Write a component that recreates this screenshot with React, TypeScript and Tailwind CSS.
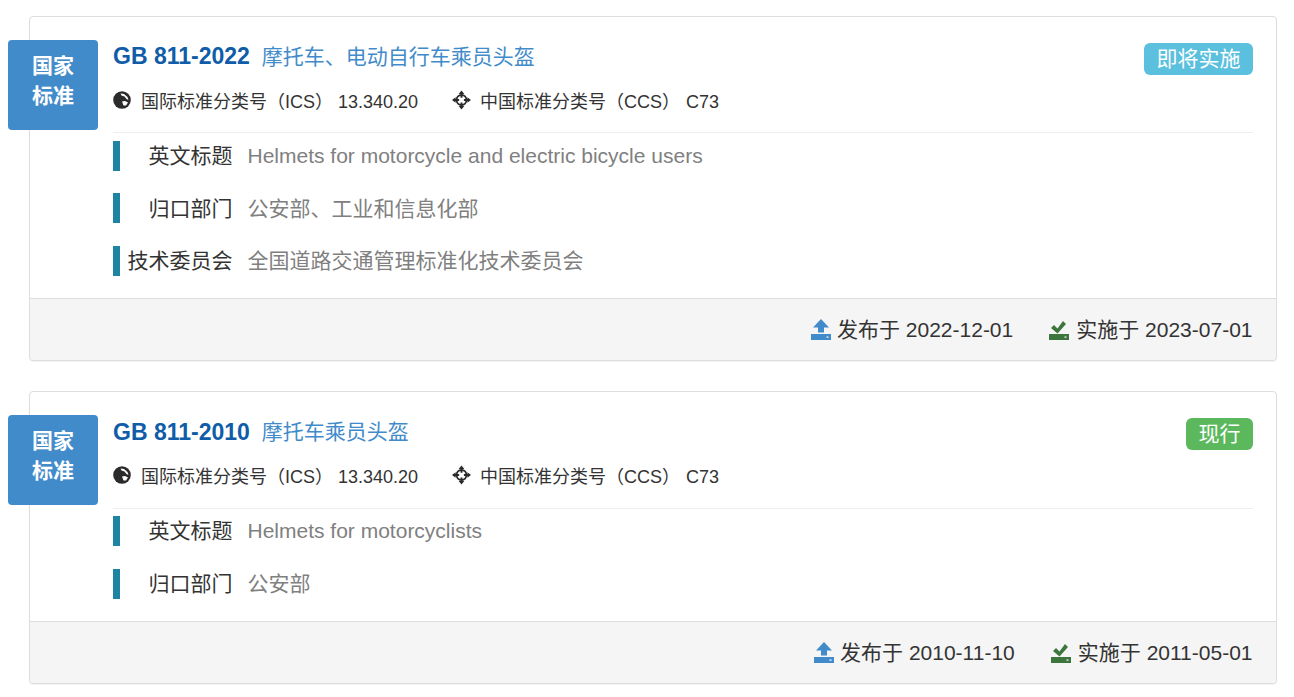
import React from 'react';

const GlobeIcon = () => (
  <svg width="18" height="18" viewBox="0 0 18 18" className="-mt-[4px] shrink-0">
    <circle cx="9" cy="9" r="8.8" fill="#2b2b2b" />
    <path d="M7.5 2.5 L11 3 L14.5 6 L15.5 9 L13.5 8 L11.5 5.5 L8.5 4.5 Z" fill="#ffffff" />
    <path d="M9 10.5 L12 10 L15 11.5 L13 14.5 L10.5 14.5 Z" fill="#ffffff" />
  </svg>
);

const TargetIcon = () => (
  <svg width="19" height="20" viewBox="0 0 20 20" className="-mt-[4px] shrink-0">
    <circle cx="10" cy="10" r="5.2" fill="none" stroke="#2b2b2b" strokeWidth="2" />
    <path d="M10 0 L13 3.8 H7 Z M10 20 L13 16.2 H7 Z M0 10 L3.8 7 V13 Z M20 10 L16.2 7 V13 Z" fill="#2b2b2b" />
    <path d="M9 3 H11 V7.5 H9 Z M9 12.5 H11 V17 H9 Z M3 9 H7.5 V11 H3 Z M12.5 9 H17 V11 H12.5 Z" fill="#2b2b2b" />
  </svg>
);

const UploadIcon = () => (
  <svg width="20" height="21" viewBox="0 0 20 21" className="shrink-0">
    <path d="M10 0 L18 8.5 H13 V13.5 H7 V8.5 H2 Z" fill="#428bca" />
    <path d="M0 15 H20 V21 H0 Z" fill="#428bca" />
    <rect x="15.5" y="17.5" width="2" height="1.2" fill="#ffffff" />
  </svg>
);

const SavedIcon = () => (
  <svg width="20" height="21" viewBox="0 0 20 21" className="shrink-0">
    <path d="M2 9 L5 6 L8.5 9.5 L14 2 L17 5 L8.5 14.5 Z" fill="#3c763d" />
    <path d="M0 15 H20 V21 H0 Z" fill="#3c763d" />
    <rect x="15.5" y="17.5" width="2" height="1.2" fill="#ffffff" />
  </svg>
);

type Row = { label: string; value: string };

type Item = {
  code: string;
  title: string;
  status: string;
  statusClass: string;
  rows: Row[];
  published: string;
  implemented: string;
};

const items: Item[] = [
  {
    code: 'GB 811-2022',
    title: '摩托车、电动自行车乘员头盔',
    status: '即将实施',
    statusClass: 'bg-[#5bc0de]',
    rows: [
      { label: '英文标题', value: 'Helmets for motorcycle and electric bicycle users' },
      { label: '归口部门', value: '公安部、工业和信息化部' },
      { label: '技术委员会', value: '全国道路交通管理标准化技术委员会' },
    ],
    published: '2022-12-01',
    implemented: '2023-07-01',
  },
  {
    code: 'GB 811-2010',
    title: '摩托车乘员头盔',
    status: '现行',
    statusClass: 'bg-[#5cb85c]',
    rows: [
      { label: '英文标题', value: 'Helmets for motorcyclists' },
      { label: '归口部门', value: '公安部' },
    ],
    published: '2010-11-10',
    implemented: '2011-05-01',
  },
];

const StandardCard = ({ item }: { item: Item }) => (
  <div className="relative w-[1248px] rounded border border-[#dddddd] bg-white shadow-[0_1px_1px_rgba(0,0,0,0.05)]">
    {/* 左侧标签 */}
    <div className="absolute left-[-22px] top-[23px] flex h-[90px] w-[90px] flex-col items-center justify-center rounded bg-[#428bca] pb-[8px] text-[21px] leading-[30px] font-bold text-white">
      <span>国家</span>
      <span>标准</span>
    </div>

    <div className="pt-[23px] pr-[23px] pl-[83px]">
      <div className="flex items-start justify-between">
        <div className="flex h-[33px] items-center">
          <span className="text-[23px] font-bold text-[#0f5ca8]">{item.code}</span>
          <span className="ml-[12px] text-[21px] text-[#428bca]">{item.title}</span>
        </div>
        <span className={`mt-[3px] rounded-md px-[12.5px] text-[21px] leading-[32px] text-white ${item.statusClass}`}>
          {item.status}
        </span>
      </div>

      <div className="mt-[13px] flex h-[30px] items-center pb-[2px] text-[18px] text-[#333333]">
        <GlobeIcon />
        <span className="ml-[10px]">国际标准分类号（ICS）</span>
        <span className="ml-[5px]">13.340.20</span>
        <span className="ml-[34px]"><TargetIcon /></span>
        <span className="ml-[9px]">中国标准分类号（CCS）</span>
        <span className="ml-[6px]">C73</span>
      </div>

      <div className="mt-[14.4px] border-t border-[#eeeeee] pt-[7.4px]">
        {item.rows.map((row) => (
          <div key={row.label} className="mb-[22.5px] flex h-[30px] items-center text-[21px]">
            <div className="h-[30px] w-[7px] shrink-0 bg-[#1f84a3]" />
            <div className="w-[112.5px] shrink-0 text-right text-[#333333]">{row.label}</div>
            <div className="ml-[15px] text-[#808080]">{row.value}</div>
          </div>
        ))}
      </div>
    </div>

    <div className="flex h-[62px] items-center justify-end gap-[36px] rounded-b border-t border-[#dddddd] bg-[#f5f5f5] pr-[23.5px] text-[21px] text-[#333333]">
      <div className="flex items-center gap-[6px]">
        <UploadIcon />
        <span>发布于 {item.published}</span>
      </div>
      <div className="flex items-center gap-[7px]">
        <SavedIcon />
        <span>实施于 {item.implemented}</span>
      </div>
    </div>
  </div>
);

export default function App() {
  return (
    <main
      className="flex h-[697px] flex-col gap-[30px] overflow-hidden bg-white pt-[16px] pl-[29px]"
      style={{ fontFamily: '"Liberation Sans", "Noto Sans CJK SC", sans-serif' }}
    >
      {items.map((item) => (
        <StandardCard key={item.code} item={item} />
      ))}
    </main>
  );
}
